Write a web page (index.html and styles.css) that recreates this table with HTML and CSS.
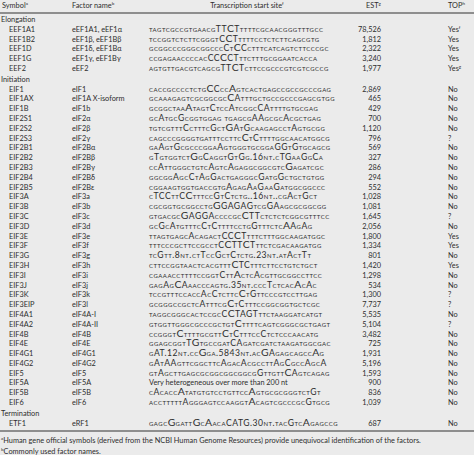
FILE: index.html
```html
<!DOCTYPE html>
<html>
<head>
<meta charset="utf-8">
<link rel="stylesheet" href="styles.css">
</head>
<body>
<div class="page">
  <div class="row head">
    <span class="c1">Symbol<sup>a</sup></span>
    <span class="c2">Factor name<sup>b</sup></span>
    <span class="c3">Transcription start site<sup>f</sup></span>
    <span class="c4">EST<sup>g</sup></span>
    <span class="c5">TOP<sup>h</sup></span>
  </div>

  <div class="section">Elongation</div>
  <div class="row"><span class="sym">EEF1A1</span><span class="fac">eEF1A1, eEF1α</span><span class="seq">tagtcgccgtgaacgTT<b>C</b>Tttttcgcaacgggtttgcc</span><span class="est">78,526</span><span class="top">Yes<sup>f</sup></span></div>
  <div class="row"><span class="sym">EEF1B2</span><span class="fac">eEF1β, eEF1Bβ</span><span class="seq">tccggtctcttcgggtC<b>C</b>Tttttcctctcttcagcgtg</span><span class="est">1,812</span><span class="top">Yes</span></div>
  <div class="row"><span class="sym">EEF1D</span><span class="fac">eEF1δ, eEF1Bα</span><span class="seq">gcggcccgggcggcccCt<b>C</b>Cctttcatcagtcttcccgc</span><span class="est">2,322</span><span class="top">Yes</span></div>
  <div class="row"><span class="sym">EEF1G</span><span class="fac">eEF1γ, eEF1Bγ</span><span class="seq">ccgagaaccccacCC<b>C</b>CTttctttgcggaatcacca</span><span class="est">3,240</span><span class="top">Yes</span></div>
  <div class="row"><span class="sym">EEF2</span><span class="fac">eEF2</span><span class="seq">agtgttgacgtcagcgTT<b>C</b>Tcttccgcccgtcgtcgccg</span><span class="est">1,977</span><span class="top">Yes<sup>g</sup></span></div>

  <div class="section">Initiation</div>
  <div class="row"><span class="sym">EIF1</span><span class="fac">eIF1</span><span class="seq">caccgcccctctg<b>C</b>Ccc<b>A</b>gtcactgagccgccgcccgag</span><span class="est">2,869</span><span class="top">No</span></div>
  <div class="row"><span class="sym">EIF1AX</span><span class="fac">eIF1A X-isoform</span><span class="seq">gcaaagagtcgcggcgc<b>C</b>Atttgctgccgcccgagcgtgg</span><span class="est">465</span><span class="top">No</span></div>
  <div class="row"><span class="sym">EIF1B</span><span class="fac">eIF1b</span><span class="seq">gcggctaa<b>A</b>tagtCtccAtcggcCAttttgtgcgag</span><span class="est">429</span><span class="top">No</span></div>
  <div class="row"><span class="sym">EIF2S1</span><span class="fac">eIF2α</span><span class="seq">gcAtgcGcggtggag tgagcgAAgcgcAcgctgag</span><span class="est">700</span><span class="top">No</span></div>
  <div class="row"><span class="sym">EIF2S2</span><span class="fac">eIF2β</span><span class="seq">tgtcgtttCctttcGct<b>G</b>AtGcaagagcctAgtgcgg</span><span class="est">1,120</span><span class="top">No</span></div>
  <div class="row"><span class="sym">EIF2S3</span><span class="fac">eIF2γ</span><span class="seq">cagcccggggtgatttccttc<b>C</b>tCttttggcaacatggcg</span><span class="est">796</span><span class="top">?</span></div>
  <div class="row"><span class="sym">EIF2B1</span><span class="fac">eIF2Bα</span><span class="seq">gaAgtGcgcccggaAgtgggtgcggaGGtGtgcagcg</span><span class="est">569</span><span class="top">No</span></div>
  <div class="row"><span class="sym">EIF2B2</span><span class="fac">eIF2Bβ</span><span class="seq">gTgtggtct<b>G</b>gCaggtGtGg.16nt.cTGaaGgCa</span><span class="est">327</span><span class="top">No</span></div>
  <div class="row"><span class="sym">EIF2B3</span><span class="fac">eIF2Bγ</span><span class="seq">ccAttgggctgtcAgtcAgaggcggcgtc<b>G</b>agatcgc</span><span class="est">286</span><span class="top">No</span></div>
  <div class="row"><span class="sym">EIF2B4</span><span class="fac">eIF2Bδ</span><span class="seq">ggcggAgcCtAgGactgagggcGatgGctgctgtgg</span><span class="est">294</span><span class="top">No</span></div>
  <div class="row"><span class="sym">EIF2B5</span><span class="fac">eIF2Bε</span><span class="seq">cggaagtggtgaccgtgAgagAaGaaGatggcggccc</span><span class="est">552</span><span class="top">No</span></div>
  <div class="row"><span class="sym">EIF3A</span><span class="fac">eIF3a</span><span class="seq">cTCCttC<b>C</b>tttccGtCtctg..16nt..cgActGct</span><span class="est">1,028</span><span class="top">No</span></div>
  <div class="row"><span class="sym">EIF3B</span><span class="fac">eIF3b</span><span class="seq">cgcggtgcggcctg<b>G</b>GAGAGtcgGAagcgcggcgg</span><span class="est">1,081</span><span class="top">No</span></div>
  <div class="row"><span class="sym">EIF3C</span><span class="fac">eIF3c</span><span class="seq">gtgacgc<b>G</b>AGGAccccgc<b>C</b>TTctctctcggcgtttcc</span><span class="est">1,645</span><span class="top">?</span></div>
  <div class="row"><span class="sym">EIF3D</span><span class="fac">eIF3d</span><span class="seq">gcGcAtgtttcCtCttttcctgGtttctc<b>A</b>AgAg</span><span class="est">2,056</span><span class="top">No</span></div>
  <div class="row"><span class="sym">EIF3E</span><span class="fac">eIF3e</span><span class="seq">ttagtgagcAcagactCC<b>C</b>Ttttctttggcaagatggc</span><span class="est">1,800</span><span class="top">Yes</span></div>
  <div class="row"><span class="sym">EIF3F</span><span class="fac">eIF3f</span><span class="seq">tttcccgcttccgcctC<b>C</b>TT<b>C</b>Tttctcgacaagatgg</span><span class="est">1,334</span><span class="top">Yes</span></div>
  <div class="row"><span class="sym">EIF3G</span><span class="fac">eIF3g</span><span class="seq">tcGtt.8nt.ctTccGctCtctg.23nt.atActTt</span><span class="est">801</span><span class="top">No</span></div>
  <div class="row"><span class="sym">EIF3H</span><span class="fac">eIF3h</span><span class="seq">cttccggtaactcacgttt<b>C</b>TCtttcttcctgtctgct</span><span class="est">1,420</span><span class="top">Yes</span></div>
  <div class="row"><span class="sym">EIF3I</span><span class="fac">eIF3i</span><span class="seq">cgaaaccttttccggtCtt<b>A</b>ctcAcgttgcggccttcc</span><span class="est">1,298</span><span class="top">No</span></div>
  <div class="row"><span class="sym">EIF3J</span><span class="fac">eIF3j</span><span class="seq">gagAg<b>C</b>Aaacccagtg.35nt.cccTctcac<b>A</b>cAc</span><span class="est">534</span><span class="top">No</span></div>
  <div class="row"><span class="sym">EIF3K</span><span class="fac">eIF3k</span><span class="seq">tccgtttccaccAcCtcttc<b>C</b>tGttcccgtccttgag</span><span class="est">1,300</span><span class="top">?</span></div>
  <div class="row"><span class="sym">EIF3EIP</span><span class="fac">eIF3l</span><span class="seq">gcgggccgctcAtttcg<b>C</b>tCtttccggcggtgctcgc</span><span class="est">7,737</span><span class="top">?</span></div>
  <div class="row"><span class="sym">EIF4A1</span><span class="fac">eIF4A-I</span><span class="seq">taggcgggcactccgcC<b>C</b>TAGTttctaaggatcatgt</span><span class="est">5,535</span><span class="top">No</span></div>
  <div class="row"><span class="sym">EIF4A2</span><span class="fac">eIF4A-II</span><span class="seq">gtggttgggcgcccgctgt<b>C</b>ttttcagtcgggcgctgagt</span><span class="est">5,104</span><span class="top">?</span></div>
  <div class="row"><span class="sym">EIF4B</span><span class="fac">eIF4B</span><span class="seq">ccgggt<b>C</b>ttttgcgtt<b>C</b>tCtttccCtctcccaacatg</span><span class="est">3,482</span><span class="top">No</span></div>
  <div class="row"><span class="sym">EIF4E</span><span class="fac">eIF4E</span><span class="seq">ggagcggtT<b>G</b>tgccgatCAgatcgatctaagatggcgac</span><span class="est">725</span><span class="top">No</span></div>
  <div class="row"><span class="sym">EIF4G1</span><span class="fac">eIF4G1</span><span class="seq">gAT.12nt.cc<b>G</b>ga.5843nt.ac<b>G</b>Agagcagcc<b>A</b>g</span><span class="est">1,931</span><span class="top">No</span></div>
  <div class="row"><span class="sym">EIF4G2</span><span class="fac">eIF4G2</span><span class="seq">gAtAAgttcggcttcAgacAcgccttAgCgccAgcA</span><span class="est">5,196</span><span class="top">No</span></div>
  <div class="row"><span class="sym">EIF5</span><span class="fac">eIF5</span><span class="seq">gtAgcttgagcgcggcggcggcgGttgtt<b>C</b>Agtcagag</span><span class="est">1,593</span><span class="top">No</span></div>
  <div class="row"><span class="sym">EIF5A</span><span class="fac">eIF5A</span><span class="seq plain">Very heterogeneous over more than 200 nt</span><span class="est">900</span><span class="top">No</span></div>
  <div class="row"><span class="sym">EIF5B</span><span class="fac">eIF5B</span><span class="seq">cAcacc<b>A</b>tatgtgtcctgttcc<b>A</b>gtgcgcgggtctGt</span><span class="est">836</span><span class="top">No</span></div>
  <div class="row"><span class="sym">EIF6</span><span class="fac">eIF6</span><span class="seq">acctttttAgggagtccaaggt<b>A</b>cagtcgcccgcGtgcg</span><span class="est">1,039</span><span class="top">No</span></div>

  <div class="section">Termination</div>
  <div class="row last"><span class="sym">ETF1</span><span class="fac">eRF1</span><span class="seq">gagc<b>G</b>gatt<b>G</b>c<b>A</b>acaCATG.30nt.tacGtc<b>A</b>gagccg</span><span class="est">687</span><span class="top">No</span></div>

  <div class="notes">
    <p><sup>a</sup>Human gene official symbols (derived from the NCBI Human Genome Resources) provide unequivocal identification of the factors.</p>
    <p><sup>b</sup>Commonly used factor names.</p>
  </div>
</div>
</body>
</html>
```

FILE: styles.css
```css
html, body {
  margin: 0;
  padding: 0;
  background: #ebebeb;
}

.page {
  width: 474px;
  height: 455px;
  background: #ebebeb;
  color: #2e2e2e;
  font-family: Lato, "Open Sans", sans-serif;
  font-size: 7.35px;
  overflow: hidden;
}

.row {
  display: grid;
  grid-template-columns: 72px 77px 196px 36px 1fr;
  height: 9.8px;
  line-height: 9.8px;
  white-space: nowrap;
}

.head {
  height: 12px;
  line-height: 11px;
  border-bottom: 2px solid #8e8e8e;
  margin-bottom: 1px;
}

.head .c1 { padding-left: 2px; }
.head .c3 { text-align: center; }
.head .c4 { text-align: right; }
.head .c5 { padding-left: 67px; }

sup {
  font-size: 4.6px;
  line-height: 0;
  vertical-align: 3px;
}

.section {
  height: 9.8px;
  line-height: 9.8px;
  padding-left: 1px;
  margin-top: 1px;
}

.sym { padding-left: 9px; }

.seq {
  font-size: 8.6px;
  font-variant: small-caps;
  letter-spacing: 0.5px;
}

.seq b {
  font-weight: normal;
  font-size: 10.4px;
  line-height: 0;
  letter-spacing: 0.3px;
}

.seq.plain {
  font-variant: normal;
  font-size: 7.35px;
  letter-spacing: 0;
}

.est { text-align: right; }
.top { padding-left: 67px; }

.last {
  height: 11px;
  border-bottom: 2px solid #8e8e8e;
}

.notes {
  padding-top: 3px;
  padding-left: 1px;
}

.notes p {
  margin: 0;
  line-height: 11.5px;
}
```
